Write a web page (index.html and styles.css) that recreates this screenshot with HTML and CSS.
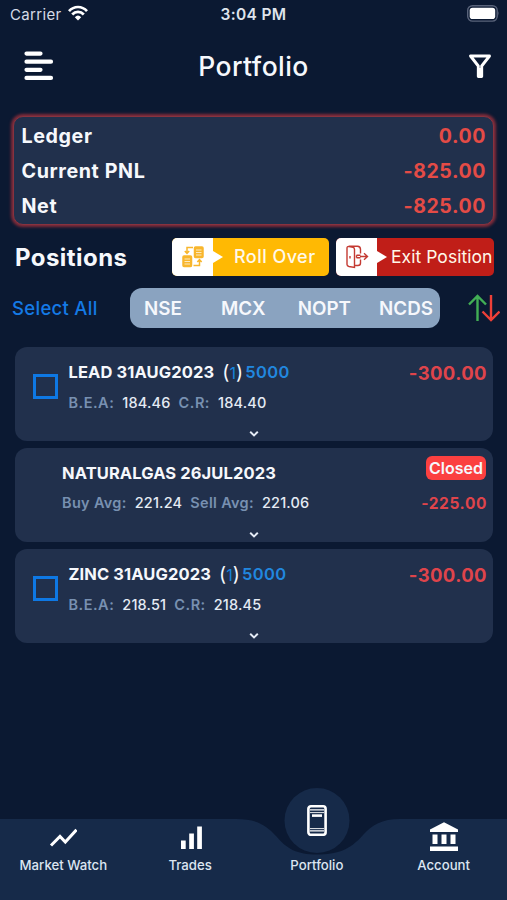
FILE: index.html
```html
<!DOCTYPE html>
<html lang="en">
<head>
<meta charset="utf-8">
<title>Portfolio</title>
<link rel="stylesheet" href="styles.css">
</head>
<body>
<div class="app">
  <div class="status">
    <div class="carrier"><span>Carrier</span>
      <svg width="20" height="16" viewBox="0 0 20 16" fill="none" stroke="#fff" stroke-width="2.7"><path d="M1 6.1C6 .6 14 .6 19 6.1M4.2 9.5C7.5 5.9 12.500 5.900 15.800 9.500"/><path d="M6.800 12.200Q10 9 13.200 12.200L10 15.400Z" fill="#fff" stroke="none"/></svg>
    </div>
    <span class="time">3:04 PM</span>
    <svg class="battery" width="33" height="17" viewBox="0 0 33 17"><rect x=".7" y=".7" width="29.500" height="15.400" rx="4.800" fill="none" stroke="#59637a" stroke-width="1.400"/><rect x="2.700" y="2.700" width="25.500" height="11.400" rx="2.800" fill="#fff"/><path d="M31.300 6q1.600 2.400 0 4.800z" fill="#59637a"/></svg>
  </div>
  <header class="header">
    <svg width="30" height="30" viewBox="0 0 30 30" stroke="#fff" stroke-width="4.200" stroke-linecap="round"><path d="M2.500 2.600H16.500M2.500 10.700H27M2.500 18.800H16.500M2.500 26.900H27"/></svg>
    <h1>Portfolio</h1>
    <svg width="24" height="24" viewBox="0 0 24 24" fill="none" stroke="#fff" stroke-width="2.900" stroke-linejoin="round"><path d="M2.500 2H21.500L13.700 12V22.500H10.300V12Z"/><path d="M12 14V21"/></svg>
  </header>
  <section class="ledger">
    <div><span>Ledger</span><b>0.00</b></div>
    <div><span>Current PNL</span><b>-825.00</b></div>
    <div><span>Net</span><b>-825.00</b></div>
  </section>
  <section class="positions">
    <h2>Positions</h2>
    <button class="action roll">
      <span class="tile"><svg width="22" height="22" viewBox="0 0 22 22" fill="none" stroke="#f8b62d" stroke-width="1.500"><rect x="12.500" y="1" width="8.500" height="10.500" rx="1" fill="#f8b62d"/><rect x="1" y="10" width="8.500" height="10.500" rx="1" fill="#f8b62d"/><path d="M14 4H19.500M14 6.500H19.500M14 9H19.500M2.500 13H8M2.500 15.500H8M2.500 18H8" stroke="#fff" stroke-width=".7"/><path d="M11 1.500H5V7M2.800 5L5 7.400 7.200 5M11.500 19.500H17.500V14M15.300 16L17.500 13.700 19.700 16"/></svg></span>
      <span class="label">Roll Over</span>
    </button>
    <button class="action exit">
      <span class="tile"><svg width="24" height="24" viewBox="0 0 24 24" fill="none" stroke="#c43a32" stroke-width="1.400"><path d="M2 3Q2 1.200 4 1.500L8 2.200Q9.500 2.500 9.500 4.500V22.500L4 21.500Q2 21 2 19.500ZM4 1.300H12.500Q15.500 1.500 15.500 4.500V8.500M9.500 20.500H13Q15.500 20.500 15.500 18V14.500M5 11V13.500M11.500 10.300H15.500M11.500 12.700H15.500M11.500 10.300V12.700M15 11.500H22M19 8.300L22.500 11.500 19 14.700"/></svg></span>
      <span class="label">Exit Position</span>
    </button>
  </section>
  <section class="filters">
    <a class="select">Select All</a>
    <nav class="segments"><span class="nse">NSE</span><span class="mcx">MCX</span><span class="nopt">NOPT</span><span class="ncds">NCDS</span></nav>
    <svg width="32" height="28" viewBox="0 0 32 28" fill="none" stroke-width="2.400"><path d="M9.500 27V2M1 10.500L9.500 2 18 10.500" stroke="#42ae55"/><path d="M23 1V26M14.500 17.500L23 26 31.500 17.500" stroke="#ee4038"/></svg>
  </section>
  <main class="cards">
    <article class="card">
      <i class="check"></i>
      <div class="info">
        <div class="name"><span>LEAD 31AUG2023</span><span class="lots">(<em>1</em>)</span><span class="qty">5000</span></div>
        <div class="stats"><span class="key">B.E.A:</span><span class="value">184.46</span><span class="key">C.R:</span><span class="value">184.40</span></div>
      </div>
      <div class="result"><b>-300.00</b></div>
      <svg class="chevron" width="10" height="8" viewBox="0 0 10 8"><path d="M1.200 1.800L5 5.400 8.800 1.800"/></svg>
    </article>
    <article class="card closed">
      <div class="info">
        <div class="name"><span>NATURALGAS 26JUL2023</span></div>
        <div class="stats"><span class="key">Buy Avg:</span><span class="value">221.24</span><span class="key">Sell Avg:</span><span class="value">221.06</span></div>
      </div>
      <div class="result"><span class="tag">Closed</span><b>-225.00</b></div>
      <svg class="chevron" width="10" height="8" viewBox="0 0 10 8"><path d="M1.200 1.800L5 5.400 8.800 1.800"/></svg>
    </article>
    <article class="card">
      <i class="check"></i>
      <div class="info">
        <div class="name"><span>ZINC 31AUG2023</span><span class="lots">(<em>1</em>)</span><span class="qty">5000</span></div>
        <div class="stats"><span class="key">B.E.A:</span><span class="value">218.51</span><span class="key">C.R:</span><span class="value">218.45</span></div>
      </div>
      <div class="result"><b>-300.00</b></div>
      <svg class="chevron" width="10" height="8" viewBox="0 0 10 8"><path d="M1.200 1.800L5 5.400 8.800 1.800"/></svg>
    </article>
  </main>
  <footer class="tabbar">
    <svg class="tabshape" width="507" height="113" viewBox="0 0 507 113" fill="#162a49"><path d="M0 32H236C256 32 266 38 276 49C287 62 297 67.500 317 67.500C337 67.500 350 63 363 48C372 38 382 32 400 32H507V113H0Z"/><circle cx="317" cy="33.500" r="32.500"/></svg>
    <div class="tabs">
      <a class="tab"><svg width="28" height="28" viewBox="0 0 28 28" fill="none" stroke="#fff" stroke-width="3"><path d="M2 21.500L11 12.500 16.300 18 27.500 5.700"/></svg><span>Market Watch</span></a>
      <a class="tab"><svg width="24" height="28" viewBox="0 0 24 28" fill="#fff"><path d="M3 16.500H7.700V25H3ZM11.200 9.500H15.900V25H11.200ZM19.200 2.500H23.900V25H19.200Z"/></svg><span>Trades</span></a>
      <a class="tab active"><svg width="20" height="32" viewBox="0 0 20 32" fill="none" stroke="#fff" stroke-width="2.600"><rect x="1.400" y="2.300" width="17.200" height="28.500" rx="2.500"/><path d="M3 5.800H17M3 26.800H17" stroke-width="1.300"/><path d="M3 8.600H17M3 24.600H17" stroke-width=".9"/><path d="M5 11.600H15"/></svg><span>Portfolio</span></a>
      <a class="tab"><svg width="30" height="32" viewBox="0 0 30 32" fill="#fff"><path d="M1 9.500L15 2.300 29 9.500V12H1ZM3.500 14.500H8.500V24H3.500ZM12.500 14.500H17.500V24H12.500ZM21.500 14.500H26.500V24H21.500ZM1 26.500H29V31H1Z"/></svg><span>Account</span></a>
    </div>
  </footer>
</div>
</body>
</html>
```
FILE: styles.css
```css
* { box-sizing: border-box; }
body { margin: 0; background: #0b1932; font-family: Inter, sans-serif; color: #f6f8fc; }
svg { display: block; flex: none; }
h1, h2 { margin: 0; }
span, b { white-space: nowrap; }
.app { width: 507px; height: 900px; display: flex; flex-direction: column; overflow: hidden; }

.status { height: 30px; display: grid; grid-template-columns: 1fr auto 1fr; align-items: center; padding: 0 7px 0 7px; line-height: 20px; }
.carrier { display: flex; gap: 6px; padding-left: 3px; font-size: 15px; letter-spacing: .35px; color: #d5dbe6; }
.time { font-size: 15.500px; font-weight: 600; letter-spacing: .35px; color: #dfe4ec; }
.battery { justify-self: end; margin-top: -3px; }

.header { height: 70px; display: grid; grid-template-columns: 1fr auto 1fr; align-items: center; padding: 2px 15px 0 15px; }
.header svg:first-child { margin-left: 9px; }
.header h1 { font-size: 26.500px; line-height: 32px; font-weight: 500; letter-spacing: .45px; }
.header svg:last-child { justify-self: end; }

.ledger { height: 109px; margin: 16px 13px 0; padding: 1px 7px 0 8px; border: 1px solid #87333f; border-radius: 10px; background: #21304c; box-shadow: 0 0 3px 2px #842c3a; }
.ledger div { height: 35px; display: flex; align-items: center; justify-content: space-between; font-size: 19.700px; font-weight: 700; letter-spacing: .6px; }
.ledger span { margin-left: -.5px; }
.ledger b { color: #e44b46; font-weight: 700; font-size: 19.500px; letter-spacing: .6px; }

.positions { height: 38px; margin-top: 13px; padding: 0 13px 0 15px; display: flex; align-items: center; }
.positions h2 { width: 157px; margin-top: 2px; font-size: 24px; line-height: 30px; letter-spacing: .45px; }
.action { width: 157px; height: 38px; padding: 0; display: flex; align-items: center; border: 0; border-radius: 5px; overflow: hidden; color: #fff8e9; font: 500 18px/24px Inter, sans-serif; }
.roll { background: #ffb903; letter-spacing: .45px; }
.exit { width: 158px; margin-left: 7px; background: #c01e18; font-size: 17.500px; font-weight: 400; letter-spacing: .05px; }
.tile { position: relative; width: 41px; height: 38px; flex: none; display: flex; align-items: center; justify-content: center; background: #fff; }
.tile::after { content: ""; position: absolute; left: 41px; top: 13px; border: 6px solid transparent; border-left: 10px solid #fff; border-right: 0; }
.roll .label { margin-left: 21px; }
.exit .label { margin-left: 14px; }

.filters { height: 40px; margin-top: 12px; padding: 0 7px 0 12px; display: flex; align-items: center; }
.select { width: 118px; color: #147ae6; font-size: 18.500px; font-weight: 500; letter-spacing: .3px; }
.segments { width: 310px; height: 40px; margin-right: 28px; padding: 0 7px 0 14px; display: flex; align-items: center; justify-content: space-between; border-radius: 12px; background: #8aa3c0; font-size: 18.800px; font-weight: 600; }
.mcx { margin-left: 11px; }
.nopt { margin-left: 4px; }

.cards { display: flex; flex-direction: column; gap: 7px; margin: 19px 14px 0 15px; }
.card { position: relative; height: 94px; padding: 15px 6px 0 18px; display: flex; border-radius: 12px; background: #21304c; }
.check { width: 25px; height: 25px; margin: 12px 11px 0 -.5px; border: 3px solid #0e78e4; }
.info { flex: 1; }
.name { height: 20px; display: flex; align-items: center; line-height: 20px; font-size: 16.500px; font-weight: 700; letter-spacing: .1px; }
.lots { margin-left: 8px; font-size: 19.500px; font-weight: 400; }
.lots em { color: #1784dc; font-style: normal; font-size: 16px; }
.qty { margin-left: 2px; color: #2187df; font-weight: 600; letter-spacing: .35px; }
.stats { height: 20px; margin-top: 10px; display: flex; align-items: center; font-size: 14.500px; }
.key { color: #7890b1; font-weight: 600; letter-spacing: .5px; }
.value { margin: 0 8px 0 8px; font-weight: 500; color: #e5ebf4; letter-spacing: .18px; }
.result { display: flex; flex-direction: column; align-items: flex-end; line-height: 22px; }
.result b { color: #df444b; font-size: 18.500px; font-weight: 700; letter-spacing: .4px; }
.closed { padding: 15px 6px 0 47px; }
.closed .stats { margin-top: 9px; }
.closed .key { letter-spacing: .32px; }
.closed .result { margin-top: -7px; }
.closed .result b { margin-top: 13px; font-size: 15.500px; letter-spacing: .6px; }
.tag { height: 24px; margin-right: 1px; padding: 0 3px; border-radius: 6px; background: #fb4040; font-size: 16px; line-height: 24px; font-weight: 600; }
.chevron { position: absolute; left: 234px; bottom: 3px; fill: none; stroke: #e4ebf6; stroke-width: 2; }

.tabbar { position: relative; height: 113px; margin-top: auto; }
.tabshape { position: absolute; inset: 0; }
.tabs { position: relative; height: 113px; display: grid; grid-template-columns: repeat(4, 1fr); }
.tab { display: flex; flex-direction: column; align-items: center; padding-top: 37px; }
.tab svg { height: 28px; }
.tab span { margin-top: 4px; font-size: 13.200px; line-height: 18px; font-weight: 500; color: #dce5f1; }
.active { padding-top: 17px; }
.tab.active svg, .tab:last-child svg { height: 32px; }
.active span { margin-top: 20px; }
.tab:last-child { padding-top: 33px; }
```
